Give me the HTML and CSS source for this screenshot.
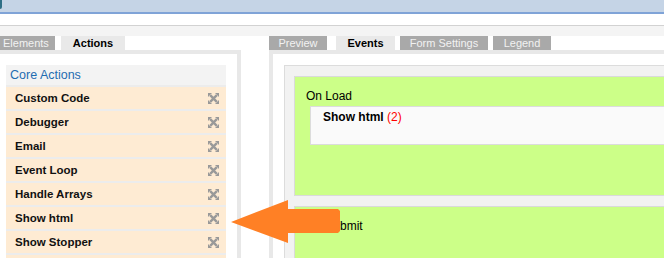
FILE: index.html
```html
<!DOCTYPE html>
<html>
<head>
<meta charset="utf-8">
<link rel="stylesheet" href="styles.css">
</head>
<body>
<div class="top-bar"><span class="logo-edge"></span></div>
<div class="sub-bar"></div>
<div class="strip"></div>
<div class="workspace">
  <div class="column left-col">
    <div class="tabs">
      <div class="tab tab-elements">Elements</div>
      <div class="tab active tab-actions">Actions</div>
    </div>
    <div class="panel left-panel">
      <div class="action-list">
        <div class="list-header">Core Actions</div>
        <div class="item"><span>Custom Code</span><svg class="move" viewBox="0 0 11 11"><use href="#mv"/></svg></div>
        <div class="item"><span>Debugger</span><svg class="move" viewBox="0 0 11 11"><use href="#mv"/></svg></div>
        <div class="item"><span>Email</span><svg class="move" viewBox="0 0 11 11"><use href="#mv"/></svg></div>
        <div class="item"><span>Event Loop</span><svg class="move" viewBox="0 0 11 11"><use href="#mv"/></svg></div>
        <div class="item"><span>Handle Arrays</span><svg class="move" viewBox="0 0 11 11"><use href="#mv"/></svg></div>
        <div class="item"><span>Show html</span><svg class="move" viewBox="0 0 11 11"><use href="#mv"/></svg></div>
        <div class="item"><span>Show Stopper</span><svg class="move" viewBox="0 0 11 11"><use href="#mv"/></svg></div>
        <div class="item"><span>&nbsp;</span></div>
      </div>
    </div>
  </div>
  <div class="column right-col">
    <div class="tabs">
      <div class="tab tab-preview">Preview</div>
      <div class="tab active tab-events">Events</div>
      <div class="tab tab-form">Form Settings</div>
      <div class="tab tab-legend">Legend</div>
    </div>
    <div class="panel right-panel">
      <div class="events-box">
        <div class="event">
          <div class="event-title">On Load</div>
          <div class="event-actions"><b>Show html</b> <span class="count">(2)</span></div>
        </div>
        <div class="event">
          <div class="event-title">On Submit</div>
        </div>
      </div>
    </div>
  </div>
</div>

<svg class="arrow" width="664" height="258" viewBox="0 0 664 258">
  <polygon points="231,222 288,200 288,209 338,209 340,211 340,231 338,233 288,233 288,243" fill="#ff8025"/>
</svg>

<svg class="defs" width="0" height="0">
  <defs>
    <g id="mv" fill="#999999">
      <path d="M2.2 2.2 L8.8 8.8 M8.8 2.2 L2.2 8.8" stroke="#999999" stroke-width="2.4" fill="none"/>
      <polygon points="0,0 4,0 0,4"/>
      <polygon points="11,0 7,0 11,4"/>
      <polygon points="0,11 4,11 0,7"/>
      <polygon points="11,11 7,11 11,7"/>
    </g>
  </defs>
</svg>
</body>
</html>
```

FILE: styles.css
```css
html, body {
  margin: 0;
  padding: 0;
  width: 664px;
  height: 258px;
  overflow: hidden;
  background: #ffffff;
  font-family: "Liberation Sans", Arial, sans-serif;
  position: relative;
}

.top-bar {
  height: 12px;
  background: #c5d4e6;
  border-bottom: 2px solid #7fa3d7;
  display: flex;
  align-items: flex-start;
}

.logo-edge {
  display: block;
  width: 2px;
  height: 9px;
  background: #2f6f86;
  border-radius: 0 0 2px 0;
}

.sub-bar {
  height: 11px;
  background: #ffffff;
  border-bottom: 1px solid #d2d2d2;
}

.strip {
  height: 10px;
  background: #f4f4f4;
}

.workspace {
  display: flex;
  gap: 28px;
  height: 222px;
  overflow: hidden;
}

.column {
  display: flex;
  flex-direction: column;
  flex: none;
  overflow: hidden;
}

.left-col { width: 241px; }
.right-col { width: 395px; }

.tabs {
  display: flex;
  height: 14px;
  flex: none;
}

.tab {
  height: 14px;
  line-height: 15px;
  font-size: 11px;
  text-align: center;
  background: #a9a9a9;
  color: #f2f2f2;
  flex: none;
}

.tab.active {
  background: #e9e9e9;
  color: #000000;
  font-weight: bold;
}

.tab-elements { width: 55px; margin-right: 6px; padding-left: 3px; text-align: left; box-sizing: border-box; }
.tab-actions { width: 64px; }
.tab-preview { width: 58px; margin-right: 9px; }
.tab-events { width: 59px; margin-right: 5px; }
.tab-form { width: 88px; margin-right: 5px; }
.tab-legend { width: 58px; }

.panel {
  border-top: 4px solid #e8e8e8;
  background: #ffffff;
  flex: 1;
  overflow: hidden;
}

.left-panel {
  border-right: 4px solid #e8e8e8;
  padding: 11px 11px 0 6px;
}

.action-list {
  background: #ececec;
  display: flex;
  flex-direction: column;
  gap: 2px;
}

.list-header {
  height: 20px;
  line-height: 20px;
  background: #f3f3f3;
  color: #1f6db1;
  font-size: 12.5px;
  padding-left: 4px;
}

.item {
  height: 22px;
  background: #feebd3;
  display: flex;
  align-items: center;
  justify-content: space-between;
  padding: 0 7px 0 9px;
  font-size: 11.5px;
  font-weight: bold;
  color: #111111;
  flex: none;
}

.move {
  width: 11px;
  height: 11px;
  display: block;
}

.right-panel {
  border-left: 4px solid #e8e8e8;
  padding: 11px 0 0 11px;
}

.events-box {
  border: 1px solid #dcdcdc;
  border-right: none;
  border-bottom: none;
  background: #f2f2f2;
  padding: 10px 0 0 9px;
  height: 200px;
}

.event {
  box-sizing: border-box;
  height: 120px;
  margin-bottom: 10px;
  background: #ccff88;
  border: 1px solid #dadada;
  border-right: none;
  padding: 11px 0 0 11px;
}

.event-title {
  font-size: 12px;
  line-height: 17px;
  color: #000000;
}

.event-actions {
  margin: 1px 0 0 4px;
  height: 35px;
  background: #fafafa;
  border: 1px solid #dcdcdc;
  border-right: none;
  padding: 2px 0 0 12px;
  font-size: 12px;
  line-height: 16px;
  color: #000000;
}

.count {
  color: #ff0000;
}

.arrow {
  position: absolute;
  left: 0;
  top: 0;
  pointer-events: none;
}

.defs {
  position: absolute;
  left: 0;
  top: 0;
}
```
